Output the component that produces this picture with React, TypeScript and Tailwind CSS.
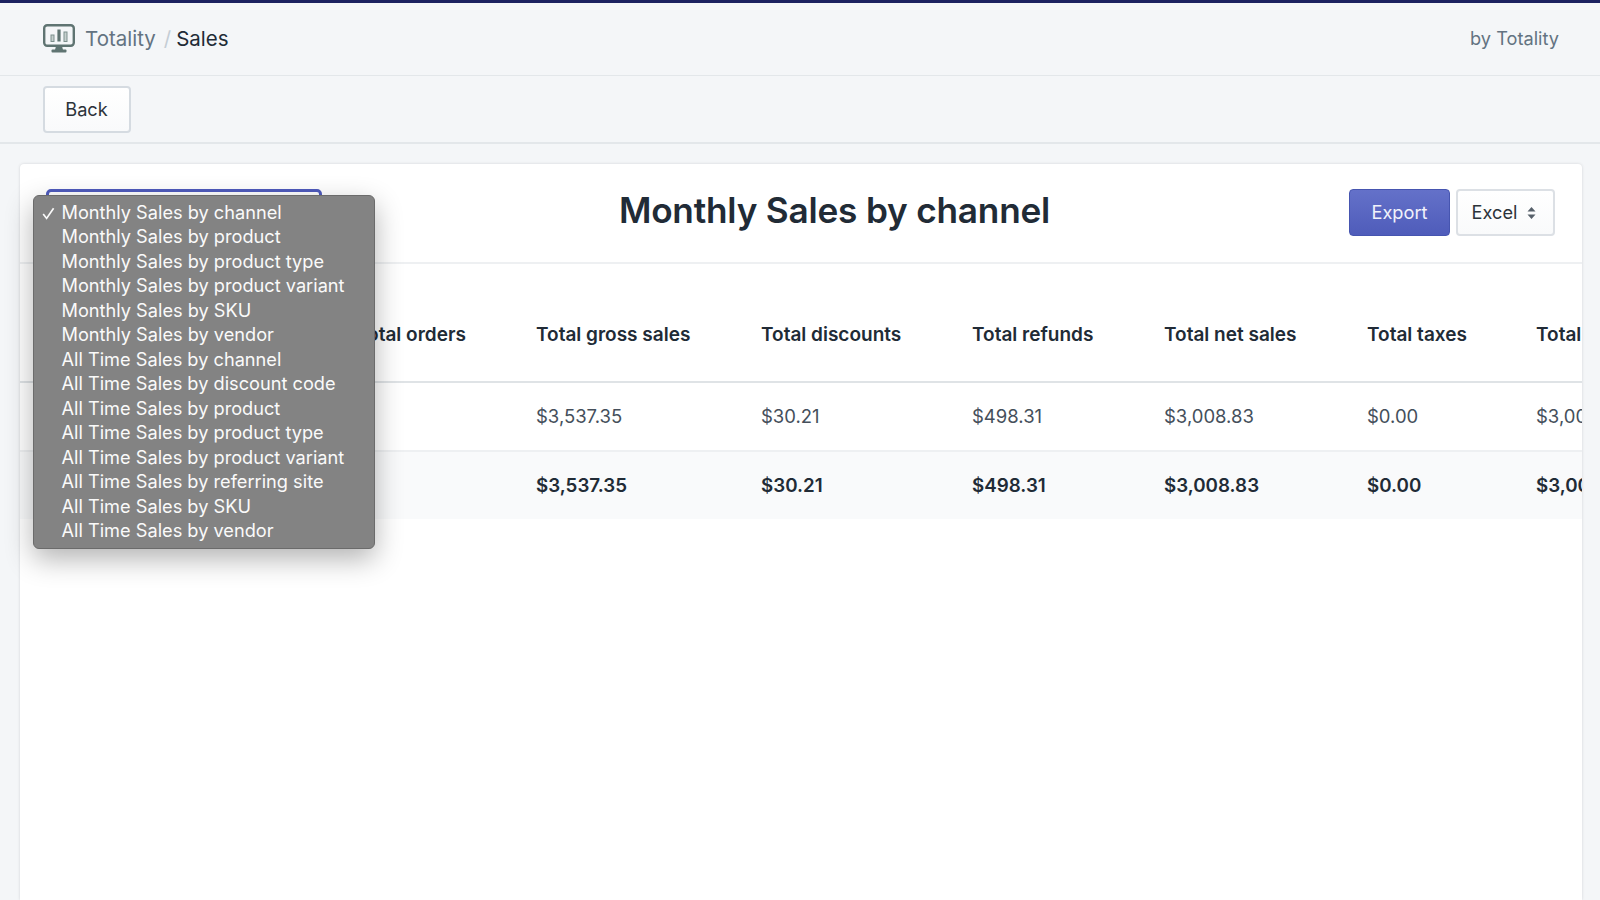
const MENU = [
  "Monthly Sales by channel",
  "Monthly Sales by product",
  "Monthly Sales by product type",
  "Monthly Sales by product variant",
  "Monthly Sales by SKU",
  "Monthly Sales by vendor",
  "All Time Sales by channel",
  "All Time Sales by discount code",
  "All Time Sales by product",
  "All Time Sales by product type",
  "All Time Sales by product variant",
  "All Time Sales by referring site",
  "All Time Sales by SKU",
  "All Time Sales by vendor",
];

const COLS = "grid grid-cols-[336px_180px_225px_211px_192px_203px_169px_200px]";
// the first two body columns sit behind the open menu in this view
const HEAD = ["", "Total orders", "Total gross sales", "Total discounts", "Total refunds", "Total net sales", "Total taxes", "Total sales"];
const ROW = ["", "", "$3,537.35", "$30.21", "$498.31", "$3,008.83", "$0.00", "$3,008.83"];

function MonitorIcon() {
  return (
    <svg width="32" height="30" viewBox="0 0 32 30" fill="none" className="shrink-0">
      <rect x="1.2" y="1.2" width="29.6" height="20.6" rx="3" stroke="#5f7472" strokeWidth="2.4" />
      <rect x="8" y="11" width="3" height="6.5" fill="#c6d0ce" stroke="#7d8f8d" strokeWidth="1" />
      <rect x="14.4" y="5.5" width="3.2" height="12" fill="#5f7472" />
      <rect x="21" y="8" width="3" height="9.5" fill="#c6d0ce" stroke="#7d8f8d" strokeWidth="1" />
      <path d="M13 22h6l1 4h-8z" fill="#5f7472" />
      <rect x="8.5" y="25.6" width="15" height="2.8" rx="1" fill="#5f7472" />
    </svg>
  );
}

export default function App() {
  return (
    <div className="h-[900px] overflow-hidden flex flex-col bg-[#f4f6f8] border-t-[3px] border-[#1c2260] font-['Inter','Liberation_Sans',sans-serif] text-[18.2px] text-[#212b36]">
      {/* Top bar */}
      <div className="h-[73px] shrink-0 flex items-center justify-between pl-[43px] pr-[41px] border-b border-[#e3e7ea]">
        <div className="flex items-center">
          <MonitorIcon />
          <span className="ml-[10px] text-[#637381] text-[20.5px]">Totality</span>
          <span className="ml-[8px] mr-[5px] text-[#c4cdd5] text-[20.5px]">/</span>
          <span className="text-[20.5px]">Sales</span>
        </div>
        <span className="text-[#637381]">by Totality</span>
      </div>

      {/* Back bar */}
      <div className="h-[68px] shrink-0 flex items-center pl-[43px] border-b-2 border-[#e3e7ea]">
        <button className="h-[47px] w-[88px] pt-[1px] pr-[1px] rounded-[4px] border-2 border-[#d5dbe1] bg-gradient-to-b from-white to-[#f9fafb] text-[#2c333a]">
          Back
        </button>
      </div>

      {/* Card */}
      <div className="flex-1 flex flex-col ml-[20px] mr-[18px] mt-[20px] min-h-0">
        <div className="relative flex-1 rounded-t-[4px] bg-white shadow-[0_0_3px_rgba(63,63,68,0.18)]">
          <div className="h-[100px] flex items-start pt-[25px] pl-[26px] pr-[27px] border-b-2 border-[#eef0f2]">
            <div className="w-[276px] h-[46px] shrink-0 rounded-[5px] border-[3px] border-[#4f5bbd]" />
            <div className="flex-1 text-center text-[35.2px] leading-[42px] font-semibold tracking-[-0.2px] pr-[3px]">Monthly Sales by channel</div>
            <button className="h-[47px] w-[101px] -ml-[1px] rounded-[4px] border border-[#4655b0] bg-gradient-to-b from-[#6471c9] to-[#4f5cba] text-[#f1f2fb]">
              Export
            </button>
            <button className="ml-[6px] h-[47px] w-[99px] pr-[3px] rounded-[4px] border-2 border-[#dce0e5] bg-gradient-to-b from-white to-[#f9fafb] flex items-center justify-center gap-[10px] text-[#2c333a]">
              Excel
              <svg width="9" height="14" viewBox="0 0 9 14" fill="#57606a">
                <path d="M4.5 1 8.5 5.5H.5zM4.5 13 .5 8.5h8z" />
              </svg>
            </button>
          </div>

          {/* Table */}
          <div className="overflow-hidden text-[18.5px]">
            <div className={`${COLS} h-[119px] items-center pt-[26px] border-b-2 border-[#dfe3e6] text-[19px] font-semibold whitespace-nowrap`}>
              {HEAD.map((h, i) => (
                <div key={i}>{h}</div>
              ))}
            </div>
            <div className={`${COLS} h-[69px] items-center border-b-2 border-[#eef0f2] text-[#454f5b] whitespace-nowrap`}>
              {ROW.map((c, i) => (
                <div key={i}>{c}</div>
              ))}
            </div>
            <div className={`${COLS} h-[67px] items-center pt-[1px] bg-[#f9fafb] text-[18.8px] font-semibold whitespace-nowrap`}>
              {ROW.map((c, i) => (
                <div key={i}>{c}</div>
              ))}
            </div>
          </div>

          {/* Open select menu */}
          <div className="absolute left-[12.5px] top-[30.5px] w-[342px] h-[354px] py-[4px] rounded-[6px] border border-[#6b6b6b] bg-[#838383] shadow-[0_10px_28px_rgba(0,0,0,0.3)] text-[#fafafa] text-[18.2px]">
            {MENU.map((m, i) => (
              <div key={m} className="relative h-[24.5px] leading-[24.5px] pl-[28px] whitespace-nowrap">
                {i === 0 && (
                  <svg width="13" height="13" viewBox="0 0 13 13" fill="none" className="absolute left-[8px] top-[7px]">
                    <path d="M1.2 7 4.6 11.4 11.6 1.2" stroke="#fafafa" strokeWidth="1.7" />
                  </svg>
                )}
                {m}
              </div>
            ))}
          </div>
        </div>
      </div>
    </div>
  );
}
